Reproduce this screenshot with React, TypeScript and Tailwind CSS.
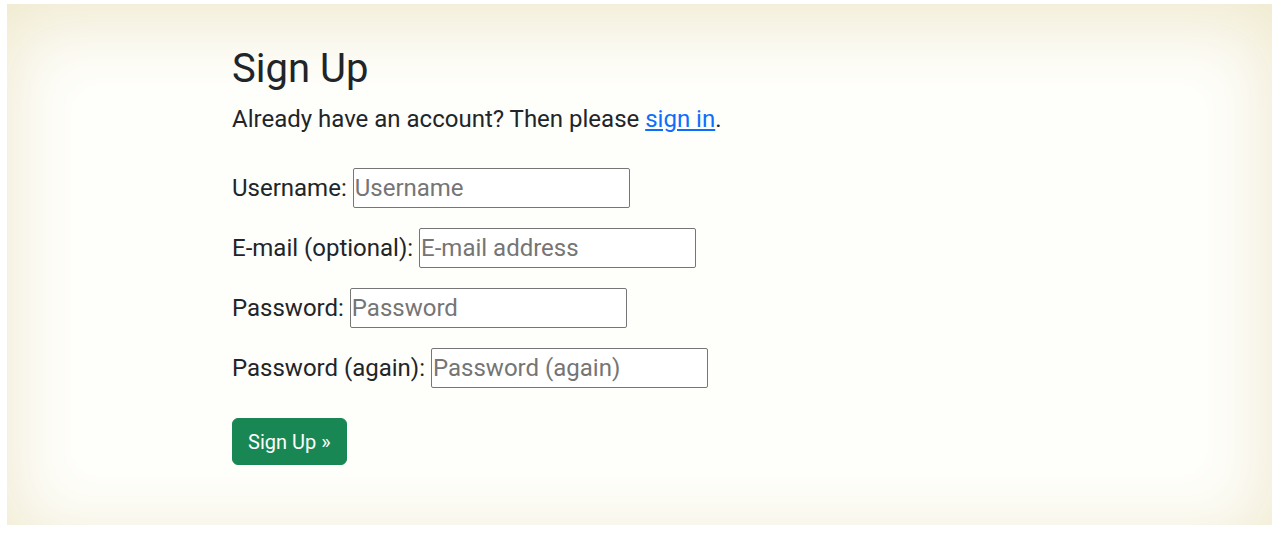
import React from "react";

const rows = [
  { label: "Username:", ph: "Username", type: "text" },
  { label: "E-mail (optional):", ph: "E-mail address", type: "email" },
  { label: "Password:", ph: "Password", type: "password" },
  { label: "Password (again):", ph: "Password (again)", type: "password" },
];

export default function App() {
  return (
    <div className="w-[1283px] h-[536px] bg-white pt-[4px] pl-[7px]" style={{ fontFamily: "Roboto, 'Liberation Sans', sans-serif" }}>
      <div className="w-[1265px] h-[521px] bg-[#fefefb] shadow-[inset_0_16px_75px_#eee7ca] pl-[225px] pt-[41px] text-[#212529]">
        <h1 className="text-[40px] leading-[48px] font-normal m-0">Sign Up</h1>
        <p className="text-[24px] leading-[36px] mt-[8px]">
          Already have an account? Then please{" "}
          <a href="#" className="text-[#0d6efd] underline">sign in</a>.
        </p>
        <form className="mt-[31px] flex flex-col gap-[20px]">
          {rows.map((r) => (
            <div key={r.label} className="flex items-center gap-[6px] text-[24px] leading-[36px]">
              <label>{r.label}</label>
              <input
                type={r.type}
                placeholder={r.ph}
                className="w-[277px] h-[40px] border border-[#767676] rounded-[2px] px-[1px] bg-white text-[24px] placeholder:text-[#757575] outline-none"
              />
            </div>
          ))}
          <div className="mt-[10px]">
            <button type="button" className="bg-[#198754] text-white text-[20px] leading-[30px] px-[15px] h-[47px] rounded-[6px] border border-[#198754]">
              Sign Up »
            </button>
          </div>
        </form>
      </div>
    </div>
  );
}
